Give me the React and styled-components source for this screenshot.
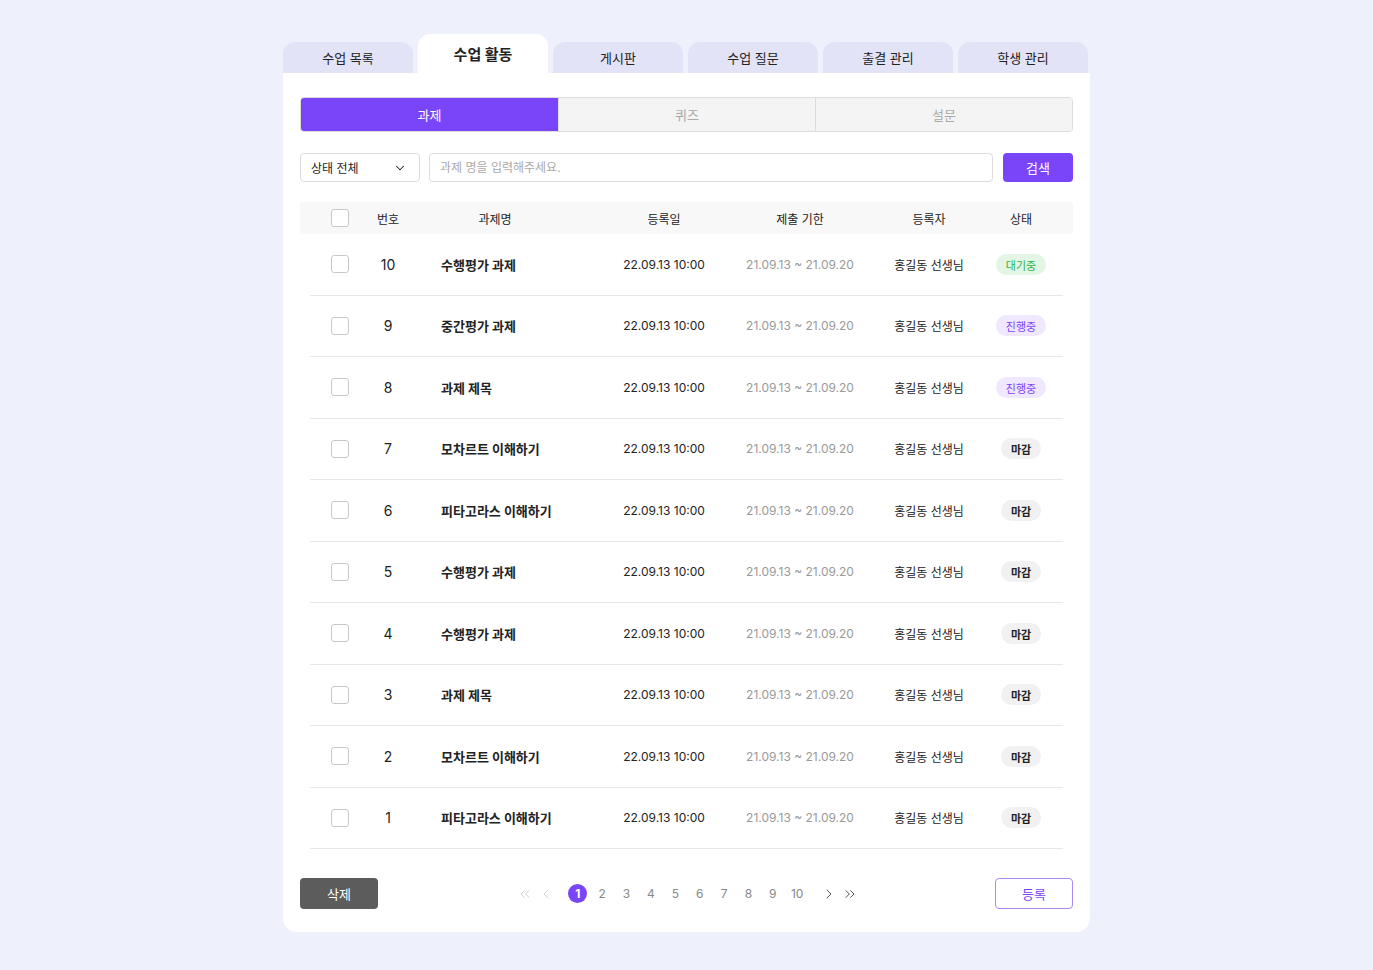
import React from 'react';
import styled, { createGlobalStyle, css } from 'styled-components';
import { ChevronDown, ChevronLeft, ChevronRight, ChevronsLeft, ChevronsRight } from 'lucide-react';

const GlobalStyle = createGlobalStyle`
  body {
    margin: 0;
    background: #eef0fb;
    font-family: Inter, "Noto Sans CJK KR", sans-serif;
    color: #222;
  }
  * { box-sizing: border-box; }
`;

const Page = styled.div`
  width: 807px;
  margin: 0 auto;
  padding: 34px 0 38px;
`;

const TabBar = styled.div`
  display: flex;
  align-items: flex-end;
  gap: 5px;
  height: 39px;
`;

const Tab = styled.div`
  width: 130px;
  height: 31px;
  border-radius: 12px 12px 0 0;
  background: #e2e3f6;
  display: flex;
  align-items: center;
  justify-content: center;
  font-size: 13px;
  color: #222;
  ${p => p.active && css`
    height: 39px;
    background: #fff;
    font-size: 15px;
    font-weight: 700;
    padding-bottom: 1px;
  `}
`;

const Card = styled.div`
  background: #fff;
  border-radius: 0 0 14px 14px;
  padding: 24px 17px 23px;
`;

const Segments = styled.div`
  display: grid;
  grid-template-columns: repeat(3, 1fr);
  height: 35px;
  border: 1px solid #dcdcdc;
  border-radius: 4px;
  overflow: hidden;
`;

const Segment = styled.div`
  display: flex;
  align-items: center;
  justify-content: center;
  font-size: 13px;
  background: ${p => (p.active ? '#7a44f8' : '#f4f4f4')};
  color: ${p => (p.active ? '#fff' : '#aaa')};
  & + & { border-left: 1px solid #dcdcdc; }
`;

const FilterRow = styled.div`
  display: flex;
  gap: 9px;
  margin-top: 21px;
  height: 29px;
`;

const Select = styled.div`
  width: 120px;
  border: 1px solid #ddd;
  border-radius: 4px;
  display: flex;
  align-items: center;
  justify-content: space-between;
  padding: 0 12px 0 10px;
  font-size: 12px;
  color: #222;
`;

const SearchInput = styled.input`
  flex: 1;
  border: 1px solid #ddd;
  border-radius: 4px;
  padding: 0 10px;
  font-size: 12px;
  font-family: inherit;
  outline: none;
  &::placeholder { color: #aaa; }
`;

const SearchButton = styled.button`
  width: 70px;
  margin-left: 1px;
  border: none;
  border-radius: 4px;
  background: #7a44f8;
  color: #fff;
  font-size: 13px;
  font-family: inherit;
`;

const cols = '60px 36px 178px 160px 112px 146px 38px';

const HeadRow = styled.div`
  display: grid;
  grid-template-columns: ${cols};
  align-items: center;
  height: 32px;
  margin-top: 20px;
  padding: 0 10px;
  background: #f8f8f8;
  border-radius: 4px;
  font-size: 12px;
  color: #222;
`;

const Row = styled.div`
  display: grid;
  grid-template-columns: ${cols};
  align-items: center;
  height: 61.5px;
  margin: 0 10px;
  border-bottom: 1px solid #e8e8e8;
  font-size: 12px;
`;

const Cell = styled.div`
  display: flex;
  align-items: center;
  justify-content: ${p => (p.left ? 'flex-start' : 'center')};
  padding-left: ${p => (p.left ? '35px' : '0')};
  white-space: nowrap;
  color: ${p => p.color || '#222'};
  font-size: ${p => p.size || '12px'};
  font-weight: ${p => p.weight || 400};
`;

const Check = styled.span`
  width: 18px;
  height: 18px;
  border: 1px solid #c8c8c8;
  border-radius: 3px;
  background: #fff;
`;

const badgeColors = {
  '대기중': { bg: '#e3f6e6', fg: '#2cb34a', w: 400 },
  '진행중': { bg: '#efe8ff', fg: '#7a44f8', w: 400 },
  '마감': { bg: '#f1f1f1', fg: '#222', w: 700 },
};

const Badge = styled.span`
  display: flex;
  align-items: center;
  height: 21px;
  padding: 1px 10px 0;
  border-radius: 11px;
  font-size: 11px;
  background: ${p => badgeColors[p.status].bg};
  color: ${p => badgeColors[p.status].fg};
  font-weight: ${p => badgeColors[p.status].w};
`;

const Footer = styled.div`
  display: flex;
  align-items: center;
  justify-content: space-between;
  margin-top: 29px;
`;

const DeleteButton = styled.button`
  width: 78px;
  height: 31px;
  border: none;
  border-radius: 4px;
  background: #5c5c5c;
  color: #fff;
  font-size: 13px;
  font-family: inherit;
`;

const RegisterButton = styled.button`
  width: 78px;
  height: 31px;
  border: 1px solid #a98af5;
  border-radius: 4px;
  background: #fff;
  color: #7a44f8;
  font-size: 13px;
  font-family: inherit;
`;

const Pager = styled.div`
  display: flex;
  align-items: center;
  gap: 12px;
  margin-left: 2px;
`;

const ArrowGroup = styled.div`
  display: flex;
  align-items: center;
  gap: 5px;
`;

const Arrow = styled.span`
  display: flex;
  width: 16px;
  justify-content: center;
  color: ${p => (p.disabled ? '#cfcfcf' : '#444')};
`;

const Pages = styled.div`
  display: flex;
  align-items: center;
`;

const PageNum = styled.span`
  width: 19px;
  height: 19px;
  margin: 0 2.7px;
  display: flex;
  align-items: center;
  justify-content: center;
  border-radius: 50%;
  font-size: 12px;
  color: #888;
  ${p => p.active && css`
    background: #7a44f8;
    color: #fff;
    font-weight: 700;
  `}
`;

const rows = [
  [10, '수행평가 과제', '대기중'],
  [9, '중간평가 과제', '진행중'],
  [8, '과제 제목', '진행중'],
  [7, '모차르트 이해하기', '마감'],
  [6, '피타고라스 이해하기', '마감'],
  [5, '수행평가 과제', '마감'],
  [4, '수행평가 과제', '마감'],
  [3, '과제 제목', '마감'],
  [2, '모차르트 이해하기', '마감'],
  [1, '피타고라스 이해하기', '마감'],
];

const tabs = ['수업 목록', '수업 활동', '게시판', '수업 질문', '출결 관리', '학생 관리'];

export default function App() {
  return (
    <Page>
      <GlobalStyle />
      <TabBar>
        {tabs.map(t => (
          <Tab key={t} active={t === '수업 활동'}>{t}</Tab>
        ))}
      </TabBar>
      <Card>
        <Segments>
          <Segment active>과제</Segment>
          <Segment>퀴즈</Segment>
          <Segment>설문</Segment>
        </Segments>

        <FilterRow>
          <Select>
            상태 전체
            <ChevronDown size={14} strokeWidth={1.8} />
          </Select>
          <SearchInput placeholder="과제 명을 입력해주세요." />
          <SearchButton>검색</SearchButton>
        </FilterRow>

        <HeadRow>
          <Cell><Check /></Cell>
          <Cell>번호</Cell>
          <Cell>과제명</Cell>
          <Cell>등록일</Cell>
          <Cell>제출 기한</Cell>
          <Cell>등록자</Cell>
          <Cell>상태</Cell>
        </HeadRow>

        {rows.map(([n, title, status]) => (
          <Row key={n}>
            <Cell><Check /></Cell>
            <Cell size="14px">{n}</Cell>
            <Cell left size="13px" weight={700}>{title}</Cell>
            <Cell>22.09.13 10:00</Cell>
            <Cell color="#999">21.09.13 ~ 21.09.20</Cell>
            <Cell>홍길동 선생님</Cell>
            <Cell><Badge status={status}>{status}</Badge></Cell>
          </Row>
        ))}

        <Footer>
          <DeleteButton>삭제</DeleteButton>
          <Pager>
            <ArrowGroup>
              <Arrow disabled><ChevronsLeft size={16} strokeWidth={1.4} /></Arrow>
              <Arrow disabled><ChevronLeft size={16} strokeWidth={1.4} /></Arrow>
            </ArrowGroup>
            <Pages>
              {[1, 2, 3, 4, 5, 6, 7, 8, 9, 10].map(p => (
                <PageNum key={p} active={p === 1}>{p}</PageNum>
              ))}
            </Pages>
            <ArrowGroup>
              <Arrow><ChevronRight size={16} strokeWidth={1.4} /></Arrow>
              <Arrow><ChevronsRight size={16} strokeWidth={1.4} /></Arrow>
            </ArrowGroup>
          </Pager>
          <RegisterButton>등록</RegisterButton>
        </Footer>
      </Card>
    </Page>
  );
}
